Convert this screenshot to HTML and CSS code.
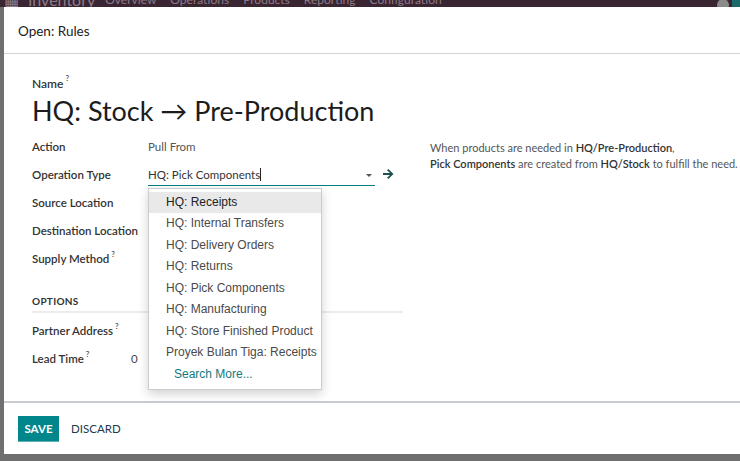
FILE: index.html
```html
<!DOCTYPE html>
<html lang="en">
<head>
    <meta charset="UTF-8">
    <title>Open: Rules</title>
    <link rel="stylesheet" href="styles.css">
</head>
<body>
<div class="navbar">
    <div class="nav-inner">
        <span class="apps">&#9638;</span>
        <span class="brand">Inventory</span>
        <span class="menu">Overview</span>
        <span class="menu">Operations</span>
        <span class="menu">Products</span>
        <span class="menu">Reporting</span>
        <span class="menu">Configuration</span>
        <span class="spacer"></span>
        <span class="avatar"></span>
        <span class="badge"></span>
    </div>
</div>
<div class="modal">
    <div class="modal-header">Open: Rules</div>
    <div class="modal-body">
        <div class="name-label">Name<sup>?</sup></div>
        <div class="title">HQ: Stock &rarr; Pre-Production</div>
        <div class="groups">
            <div class="group-left">
                <div class="row"><div class="label">Action</div><div class="value">Pull From</div></div>
                <div class="row">
                    <div class="label">Operation Type</div>
                    <div class="value field">
                        <div class="input">HQ: Pick Components<span class="cursor"></span><span class="caret"></span></div>
                        <svg class="ext" width="11" height="10" viewBox="0 0 11 10"><path d="M0 4h7L4 1.2 5.3 0 10.5 5 5.3 10 4 8.8 7 6H0z" fill="#1f4f4e"/></svg>
                        <div class="dropdown">
                            <div class="item active">HQ: Receipts</div>
                            <div class="item">HQ: Internal Transfers</div>
                            <div class="item">HQ: Delivery Orders</div>
                            <div class="item">HQ: Returns</div>
                            <div class="item">HQ: Pick Components</div>
                            <div class="item">HQ: Manufacturing</div>
                            <div class="item">HQ: Store Finished Product</div>
                            <div class="item">Proyek Bulan Tiga: Receipts</div>
                            <div class="item more">Search More...</div>
                        </div>
                    </div>
                </div>
                <div class="row"><div class="label">Source Location</div><div class="value"></div></div>
                <div class="row"><div class="label">Destination Location</div><div class="value"></div></div>
                <div class="row"><div class="label">Supply Method<sup>?</sup></div><div class="value"></div></div>
                <div class="section">OPTIONS</div>
                <div class="row"><div class="label">Partner Address<sup>?</sup></div><div class="value"></div></div>
                <div class="row"><div class="label lead">Lead Time<sup>?</sup></div><div class="value zero">0</div></div>
            </div>
            <div class="group-right">
                <div class="help">When products are needed in <b>HQ/Pre-Production</b>,<br><b>Pick Components</b> are created from <b>HQ/Stock</b> to fulfill the need.</div>
            </div>
        </div>
    </div>
    <div class="modal-footer">
        <button class="btn-save">SAVE</button>
        <button class="btn-discard">DISCARD</button>
    </div>
</div>
</body>
</html>
```
FILE: styles.css
```css
body{
    margin: 0;
    background: #6f6f6f;
    font-family: Lato, "Open Sans", sans-serif;
    color: #222;
    width: 740px;
    height: 461px;
    overflow: hidden;
}
.navbar{
    height: 7px;
    background: #3a2533;
    overflow: hidden;
}
.nav-inner{
    display: flex;
    align-items: center;
    height: 24px;
    margin-top: -13px;
    color: #8d7c88;
    font-size: 12px;
}
.apps{
    margin-left: 4px;
    width: 18px;
    font-size: 16px;
}
.brand{
    margin-left: 6px;
    font-size: 16px;
    margin-right: 10px;
}
.menu{
    margin-right: 14px;
}
.spacer{ flex: 1; }
.avatar{
    width: 12px;
    height: 12px;
    border-radius: 50%;
    background: #8a8a8a;
    margin-top: 12px;
    margin-right: 3px;
}
.badge{
    width: 8px;
    height: 12px;
    background: #1b6b6a;
    margin-top: 8px;
}
.modal{
    margin-left: 4px;
    background: #fff;
    height: 447px;
    display: flex;
    flex-direction: column;
}
.modal-header{
    height: 47px;
    border-bottom: 1px solid #d4d4d4;
    display: flex;
    align-items: center;
    padding-left: 14px;
    padding-top: 1px;
    font-size: 13.5px;
    color: #222;
    box-sizing: border-box;
}
.modal-body{
    flex: 1;
    padding: 22px 0 0 28px;
    position: relative;
}
sup{
    font-size: 8px;
    vertical-align: top;
    position: relative;
    top: -3px;
    margin-left: 2px;
    color: #444;
}
.name-label{
    font-size: 12px;
    font-weight: 600;
    color: #333;
    height: 14px;
}
.title{
    font-size: 27px;
    line-height: 36px;
    margin-top: 3px;
    color: #1c1c1c;
}
.groups{
    display: flex;
    margin-top: 3px;
}
.group-left{
    width: 371px;
}
.group-right{
    padding-left: 27px;
    padding-top: 8px;
}
.row{
    display: flex;
    align-items: center;
    height: 28px;
    font-size: 11.5px;
}
.label{
    width: 116px;
    color: #333;
    font-weight: 600;
}
.label.lead{
    width: 99px;
}
.value{
    color: #555;
    flex: 1;
    font-size: 11.5px;
}
.zero{
    color: #444;
}
.field{
    position: relative;
    display: flex;
    align-items: center;
}
.input{
    width: 227px;
    height: 20px;
    line-height: 20px;
    border-bottom: 1px solid #017e84;
    color: #333;
    position: relative;
    margin-top: 2px;
}
.cursor{
    display: inline-block;
    width: 1px;
    height: 13px;
    background: #222;
    vertical-align: -2px;
}
.caret{
    position: absolute;
    right: 3px;
    top: 9px;
    border-left: 3px solid transparent;
    border-right: 3px solid transparent;
    border-top: 3px solid #555;
}
.ext{
    margin-left: 8px;
}
.dropdown{
    position: absolute;
    left: 0;
    top: 25px;
    width: 172px;
    background: #fff;
    border: 1px solid #ccc;
    box-shadow: 0 4px 10px rgba(0,0,0,0.18);
    padding: 3px 0 5px;
    z-index: 10;
    font-family: "Liberation Sans", Arial, sans-serif;
}
.item{
    height: 21.5px;
    line-height: 21.5px;
    padding-left: 17px;
    font-size: 12px;
    color: #4a4a4a;
    white-space: nowrap;
}
.item.active{
    background: #e9e9e9;
    color: #222;
}
.item.more{
    padding-left: 25px;
    color: #127a80;
    height: 20px;
    line-height: 20px;
}
.section{
    margin-top: 23px;
    font-size: 10px;
    font-weight: 700;
    color: #333;
    letter-spacing: 0.3px;
    padding-bottom: 4px;
    border-bottom: 2px solid #ececec;
    margin-bottom: 3px;
}
.help{
    font-size: 11px;
    line-height: 16px;
    color: #555;
}
.help b{
    font-weight: 600;
    color: #333;
}
.modal-footer{
    height: 53px;
    border-top: 2px solid #c8ccd0;
    display: flex;
    align-items: center;
    padding-left: 14px;
    box-sizing: border-box;
}
.btn-save{
    background: #00868b;
    color: #fff;
    border: none;
    border-bottom: 1px solid #5fb0b3;
    font-family: Lato, sans-serif;
    font-weight: 700;
    font-size: 11.5px;
    height: 26px;
    width: 41px;
    padding: 0;
}
.btn-discard{
    background: none;
    border: none;
    color: #1e3a4a;
    font-family: Lato, sans-serif;
    font-size: 11.5px;
    margin-left: 8px;
    padding: 0 4px;
}
```
